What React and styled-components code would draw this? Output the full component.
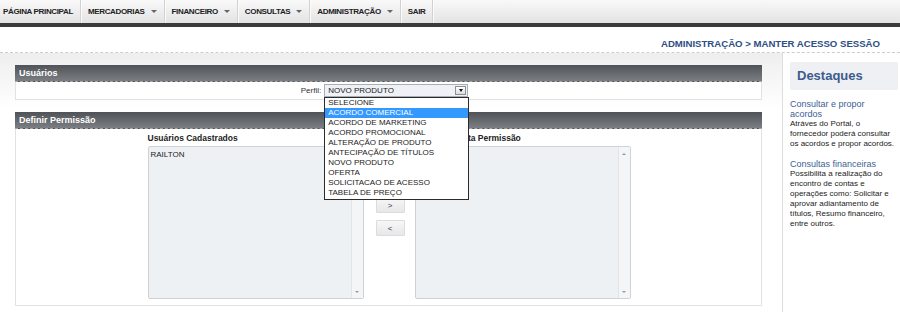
import React from 'react'
import styled, { createGlobalStyle } from 'styled-components'

const GlobalStyle = createGlobalStyle`
  html, body {
    margin: 0;
    padding: 0;
    background: #fff;
  }
  body {
    font-family: "Liberation Sans", Arial, sans-serif;
    color: #222;
  }
`

const Pagina = styled.div`
  width: 900px;
`

const BarraMenu = styled.div`
  display: flex;
  height: 23px;
  background: linear-gradient(#f9f9f9, #e3e3e3);
  border-bottom: 4px solid #3b3b3b;
`

const ItemMenu = styled.div`
  display: flex;
  align-items: center;
  gap: 6px;
  padding: 0 7px 0 ${(p) => (p.$primeiro ? '3px' : '7px')};
  border-right: 1px solid #d2d2d2;
  box-shadow: 1px 0 0 #fbfbfb;
  font-size: 8px;
  font-weight: bold;
  letter-spacing: -0.35px;
  color: #222;
  white-space: nowrap;
`

const Seta = styled.span`
  width: 0;
  height: 0;
  border-left: 3px solid transparent;
  border-right: 3px solid transparent;
  border-top: 3px solid #666;
`

const Trilha = styled.div`
  box-sizing: border-box;
  height: 26px;
  padding: 11px 20px 0 0;
  text-align: right;
  font-size: 9.6px;
  font-weight: bold;
  line-height: 12px;
  color: #2d4e86;
  border-bottom: 1px dashed #cdcdcd;
`

const Conteudo = styled.div`
  display: flex;
`

const Principal = styled.div`
  box-sizing: border-box;
  flex: 0 0 782px;
  padding: 12px 20px 6px 15px;
  background: linear-gradient(#eeeeee, #ffffff 55px);
`

const Painel = styled.div`
  margin-bottom: ${(p) => (p.$ultimo ? '0' : '12px')};
`

const CabecalhoPainel = styled.div`
  box-sizing: border-box;
  height: 17px;
  padding-left: 4px;
  background: linear-gradient(#4f5256, #7b7e82);
  border-bottom: 1px dashed #a8a8a8;
  font-size: 9px;
  font-weight: bold;
  line-height: 16px;
  color: #fff;
`

const CorpoPainel = styled.div`
  box-sizing: border-box;
  height: ${(p) => p.$altura}px;
  border: 1px solid #e2e2e2;
  border-top: none;
  background: #fff;
`

const LinhaPerfil = styled.div`
  display: flex;
  align-items: center;
  justify-content: center;
  gap: 3px;
  height: 100%;
  padding-right: 8px;
`

const Rotulo = styled.span`
  font-size: 8px;
  color: #333;
`

const CaixaSelect = styled.div`
  position: relative;
  box-sizing: border-box;
  display: flex;
  align-items: center;
  justify-content: space-between;
  width: 144px;
  height: 13px;
  padding-left: 3px;
  border: 1px solid #a7aeb6;
  background: #eef1f5;
  font-size: 8px;
  color: #222;
`

const BotaoSelect = styled.span`
  box-sizing: border-box;
  display: flex;
  align-items: center;
  justify-content: center;
  width: 11px;
  height: 9px;
  margin-right: 1px;
  border: 1px solid #8c8f94;
  background: linear-gradient(#ffffff, #d9dce0);

  &::after {
    content: '';
    border-left: 2.5px solid transparent;
    border-right: 2.5px solid transparent;
    border-top: 3px solid #111;
  }
`

const ListaOpcoes = styled.div`
  position: absolute;
  top: 12px;
  left: -1px;
  z-index: 10;
  box-sizing: border-box;
  width: 145px;
  padding: 0 0 1px;
  border: 1px solid #2b2b2b;
  background: #fff;
`

const Opcao = styled.div`
  height: 10px;
  padding-left: 3px;
  font-size: 8px;
  line-height: 10px;
  white-space: nowrap;
  color: ${(p) => (p.$ativa ? '#fff' : '#222')};
  background: ${(p) => (p.$ativa ? '#3399ff' : 'transparent')};
`

const Transferencia = styled.div`
  display: flex;
  justify-content: center;
  padding: 3px 0 0 1px;
`

const Coluna = styled.div`
  width: 216px;
`

const TituloColuna = styled.div`
  height: 14px;
  font-size: 8.5px;
  font-weight: bold;
  line-height: 13px;
  color: #222;
  white-space: nowrap;
`

const CaixaLista = styled.div`
  box-sizing: border-box;
  display: flex;
  height: 153px;
  border: 1px solid #cfd3d8;
  border-radius: 2px;
  background: #eef1f4;
`

const ItensLista = styled.div`
  flex: 1;
  padding: 3px 2px;
  font-size: 8px;
  line-height: 10px;
  color: #222;
`

const Rolagem = styled.div`
  display: flex;
  flex-direction: column;
  justify-content: space-between;
  align-items: center;
  width: 11px;
  padding: 6px 0 5px;
  border-left: 1px solid #e2e4e6;
  background: #f4f5f6;
`

const SetaRolagem = styled.span`
  width: 0;
  height: 0;
  border-left: 2px solid transparent;
  border-right: 2px solid transparent;
  ${(p) => (p.$cima ? 'border-bottom: 2px solid #9a9a9a;' : 'border-top: 2px solid #9a9a9a;')}
`

const Botoes = styled.div`
  display: flex;
  flex-direction: column;
  gap: 7px;
  margin: 65px 10px 0 12px;
`

const Botao = styled.button`
  box-sizing: border-box;
  width: 29px;
  height: 16px;
  padding: 0;
  border: 1px solid #dcdcdc;
  border-radius: 1px;
  background: linear-gradient(#f7f7f7, #e6e7e9);
  font-family: "Liberation Sans", Arial, sans-serif;
  font-size: 8px;
  color: #333;
`

const Lateral = styled.div`
  flex: 1;
  padding: 9px 2px 0 7px;
  border-left: 1px solid #dddddd;
  background: #fff;
`

const CaixaDestaques = styled.div`
  height: 28px;
  padding-left: 7px;
  background: #eef0f4;
  font-size: 13px;
  font-weight: bold;
  line-height: 28px;
  color: #3c5b8d;
`

const Destaque = styled.div`
  width: 106px;
  margin-top: ${(p) => (p.$primeiro ? '9px' : '10px')};
`

const TituloDestaque = styled.div`
  width: 100px;
  font-size: 9px;
  line-height: 10px;
  color: #3d5f95;
`

const TextoDestaque = styled.div`
  font-size: 8px;
  line-height: 10px;
  color: #222;
`

const menu = [
  { nome: 'PÁGINA PRINCIPAL', seta: false },
  { nome: 'MERCADORIAS', seta: true },
  { nome: 'FINANCEIRO', seta: true },
  { nome: 'CONSULTAS', seta: true },
  { nome: 'ADMINISTRAÇÃO', seta: true },
  { nome: 'SAIR', seta: false },
]

const perfis = [
  'SELECIONE',
  'ACORDO COMERCIAL',
  'ACORDO DE MARKETING',
  'ACORDO PROMOCIONAL',
  'ALTERAÇÃO DE PRODUTO',
  'ANTECIPAÇÃO DE TÍTULOS',
  'NOVO PRODUTO',
  'OFERTA',
  'SOLICITACAO DE ACESSO',
  'TABELA DE PREÇO',
]

const destaques = [
  {
    titulo: 'Consultar e propor acordos',
    texto: 'Atráves do Portal, o fornecedor poderá consultar os acordos e propor acordos.',
  },
  {
    titulo: 'Consultas financeiras',
    texto: 'Possibilita a realização do encontro de contas e operações como: Solicitar e aprovar adiantamento de títulos, Resumo financeiro, entre outros.',
  },
]

function ListaUsuarios({ titulo, usuarios }) {
  return (
    <Coluna>
      <TituloColuna>{titulo}</TituloColuna>
      <CaixaLista>
        <ItensLista>
          {usuarios.map((u) => (
            <div key={u}>{u}</div>
          ))}
        </ItensLista>
        <Rolagem>
          <SetaRolagem $cima />
          <SetaRolagem />
        </Rolagem>
      </CaixaLista>
    </Coluna>
  )
}

export default function App() {
  return (
    <Pagina>
      <GlobalStyle />
      <BarraMenu>
        {menu.map((item, i) => (
          <ItemMenu key={item.nome} $primeiro={i === 0}>
            {item.nome}
            {item.seta && <Seta />}
          </ItemMenu>
        ))}
      </BarraMenu>

      <Trilha>ADMINISTRAÇÃO &gt; MANTER ACESSO SESSÃO</Trilha>

      <Conteudo>
        <Principal>
          <Painel>
            <CabecalhoPainel>Usuários</CabecalhoPainel>
            <CorpoPainel $altura={18}>
              <LinhaPerfil>
                <Rotulo>Perfil:</Rotulo>
                <CaixaSelect>
                  NOVO PRODUTO
                  <BotaoSelect />
                  <ListaOpcoes>
                    {perfis.map((p) => (
                      <Opcao key={p} $ativa={p === 'ACORDO COMERCIAL'}>
                        {p}
                      </Opcao>
                    ))}
                  </ListaOpcoes>
                </CaixaSelect>
              </LinhaPerfil>
            </CorpoPainel>
          </Painel>

          <Painel $ultimo>
            <CabecalhoPainel>Definir Permissão</CabecalhoPainel>
            <CorpoPainel $altura={177}>
              <Transferencia>
                <ListaUsuarios titulo="Usuários Cadastrados" usuarios={['RAILTON']} />
                <Botoes>
                  <Botao>&gt;</Botao>
                  <Botao>&lt;</Botao>
                </Botoes>
                <ListaUsuarios titulo="Usuários nesta Permissão" usuarios={[]} />
              </Transferencia>
            </CorpoPainel>
          </Painel>
        </Principal>

        <Lateral>
          <CaixaDestaques>Destaques</CaixaDestaques>
          {destaques.map((d, i) => (
            <Destaque key={d.titulo} $primeiro={i === 0}>
              <TituloDestaque>{d.titulo}</TituloDestaque>
              <TextoDestaque>{d.texto}</TextoDestaque>
            </Destaque>
          ))}
        </Lateral>
      </Conteudo>
    </Pagina>
  )
}
